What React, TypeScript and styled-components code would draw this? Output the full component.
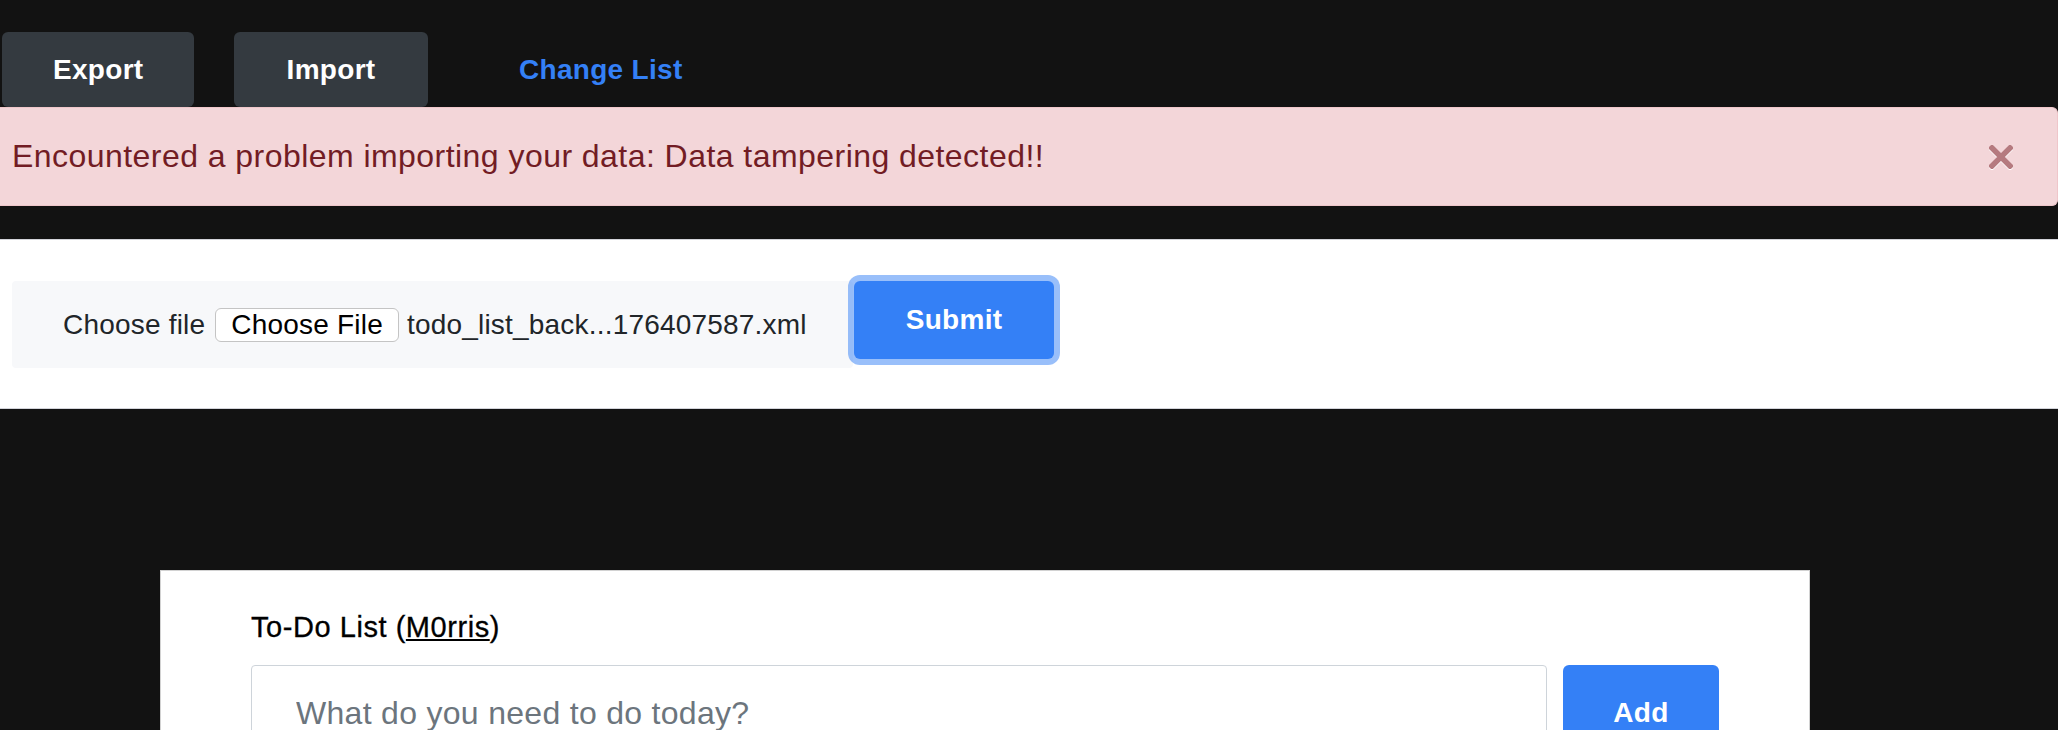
import { createGlobalStyle, styled } from 'styled-components';

const GlobalStyle = createGlobalStyle`
  html, body {
    margin: 0;
    padding: 0;
    background-color: #121212;
  }
  body {
    width: 2058px;
    height: 730px;
    overflow: hidden;
    font-family: "Liberation Sans", Arial, sans-serif;
  }
  * {
    box-sizing: border-box;
  }
`;

const TopBar = styled.nav`
  display: flex;
  gap: 40px;
  padding: 32px 0 0 2px;
`;

const TabButton = styled.button<{ $link?: boolean; $width?: number }>`
  width: ${props => (props.$width ? `${props.$width}px` : 'auto')};
  height: 75px;
  padding: 0 51px;
  border: none;
  border-radius: 6px;
  background-color: ${props => (props.$link ? 'transparent' : '#343a40')};
  color: ${props => (props.$link ? '#3480f6' : '#fff')};
  font-family: inherit;
  font-size: 28px;
  font-weight: 700;
  letter-spacing: 0.3px;
  cursor: pointer;
`;

const Alert = styled.div`
  display: flex;
  align-items: center;
  justify-content: space-between;
  height: 99px;
  padding: 0 44px 0 12px;
  background-color: #f3d6d9;
  border: 1px solid #efc6ca;
  border-left: none;
  border-radius: 0 6px 6px 0;
  color: #721c24;
  font-size: 32px;
  letter-spacing: 0.45px;
`;

const CloseButton = styled.button`
  display: flex;
  padding: 0;
  border: none;
  background: none;
  cursor: pointer;
  filter: drop-shadow(0 1px 0 #fff);
`;

const UploadSection = styled.section`
  display: flex;
  align-items: flex-start;
  margin-top: 33px;
  padding: 41px 12px 40px;
  background-color: #fff;
  border-top: 1px solid #d3d4da;
  border-bottom: 1px solid #d3d4da;
`;

const FileBox = styled.div`
  display: flex;
  align-items: center;
  width: 841px;
  height: 87px;
  padding: 0 0 0 51px;
  background-color: #f7f8fa;
  border-radius: 4px;
  color: #212529;
  font-size: 28px;
  letter-spacing: 0.2px;
`;

const FileLabel = styled.span`
  margin-right: 10px;
`;

const FilePicker = styled.span`
  display: inline-flex;
  align-items: center;
  height: 34px;
  padding: 0 15px;
  margin-right: 8px;
  background-color: #fff;
  border: 1px solid #c4c4c4;
  border-radius: 6px;
  color: #000;
`;

const PrimaryButton = styled.button<{ $width: number; $height: number; $focus?: boolean }>`
  width: ${props => props.$width}px;
  height: ${props => props.$height}px;
  border: none;
  border-radius: 6px;
  background-color: #3480f6;
  color: #fff;
  font-family: inherit;
  font-size: 28px;
  font-weight: 700;
  letter-spacing: 0.3px;
  cursor: pointer;
  box-shadow: ${props => (props.$focus ? '0 0 0 6px rgba(52, 128, 246, 0.5)' : 'none')};
`;

const SubmitWrap = styled.div`
  margin-left: 1px;
`;

const Card = styled.div`
  width: 1650px;
  margin: 161px 0 0 160px;
  padding: 35px 90px;
  background-color: #fff;
  border: 1px solid #d2d2d2;
`;

const Title = styled.label`
  display: block;
  margin-bottom: 17px;
  color: #000;
  font-size: 29px;
  line-height: 42px;
  letter-spacing: 0.55px;
  -webkit-text-stroke: 0.3px #000;
  a {
    color: inherit;
    text-decoration: underline;
  }
`;

const InputRow = styled.div`
  display: flex;
  gap: 16px;
`;

const TodoInput = styled.input`
  flex: 1;
  height: 96px;
  padding: 0 44px;
  border: 1px solid #ced4da;
  border-radius: 4px;
  font-family: inherit;
  font-size: 32px;
  letter-spacing: 0.3px;
  color: #495057;
  &::placeholder {
    color: #6c757d;
  }
`;

export default function App() {
  return (
    <>
      <GlobalStyle />
      <TopBar>
        <TabButton $width={192}>Export</TabButton>
        <TabButton $width={194}>Import</TabButton>
        <TabButton $link>Change List</TabButton>
      </TopBar>

      <Alert role="alert">
        <span>Encountered a problem importing your data: Data tampering detected!!</span>
        <CloseButton aria-label="Close">
          <svg width="24" height="24" viewBox="0 0 24 24">
            <path d="M3 3 L21 21 M21 3 L3 21" stroke="#b57a7f" strokeWidth="5.5" strokeLinecap="square" />
          </svg>
        </CloseButton>
      </Alert>

      <UploadSection>
        <FileBox>
          <FileLabel>Choose file</FileLabel>
          <FilePicker>Choose File</FilePicker>
          <span>todo_list_back...176407587.xml</span>
        </FileBox>
        <SubmitWrap>
          <PrimaryButton $width={200} $height={78} $focus>Submit</PrimaryButton>
        </SubmitWrap>
      </UploadSection>

      <Card>
        <Title>
          To-Do List (<a href="#">M0rris</a>)
        </Title>
        <InputRow>
          <TodoInput placeholder="What do you need to do today?" />
          <PrimaryButton $width={156} $height={96}>Add</PrimaryButton>
        </InputRow>
      </Card>
    </>
  );
}
